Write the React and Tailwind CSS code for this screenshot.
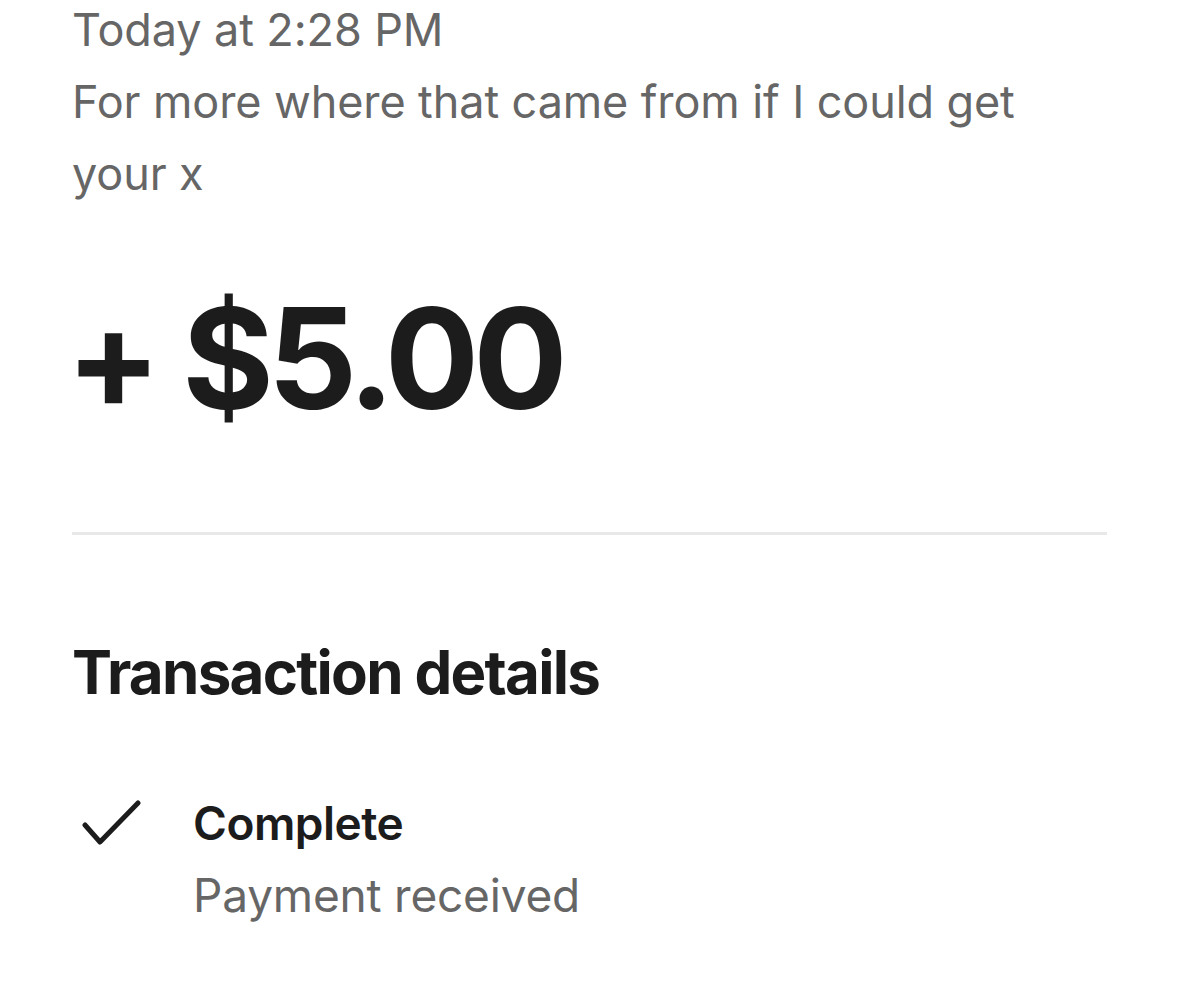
import React from 'react';

const App = () => {
  return (
    <div className="w-[1179px] h-[983px] bg-white overflow-hidden font-['Inter','Liberation_Sans',sans-serif]">
      <div className="pl-[72px] pr-[72px] -mt-[6px]">
        {/* header text */}
        <p className="text-[45px] leading-[72px] text-[#666666] tracking-[-0.1px]">Today at 2:28 PM</p>
        <p className="text-[45px] leading-[72px] text-[#666666] tracking-[-0.1px] w-[980px]">
          For more where that came from if I could get your x
        </p>

        {/* amount */}
        <div className="mt-[68px] -ml-[6px] text-[140px] leading-[160px] font-bold text-[#1c1c1c] tracking-[-6px]">
          + $5.00
        </div>

        <div className="mt-[94px] h-[3px] bg-[#e8e8e8]" />

        {/* details */}
        <h2 className="mt-[102px] text-[60px] leading-[70px] font-bold text-[#1c1c1c] tracking-[-1.7px]">
          Transaction details
        </h2>

        <div className="mt-[80px] flex">
          <div className="w-[121px] pt-[12px] pl-[10px]">
            <svg width="60" height="48" viewBox="0 0 60 48" fill="none">
              <path d="M3 26 L18 43 L56 4" stroke="#1c1c1c" strokeWidth="5" strokeLinecap="round" strokeLinejoin="round" />
            </svg>
          </div>
          <div>
            <p className="text-[46px] leading-[72px] font-semibold text-[#1c1c1c] tracking-[-0.5px]">Complete</p>
            <p className="text-[46px] leading-[72px] text-[#666666] tracking-[-0.2px]">Payment received</p>
          </div>
        </div>
      </div>
    </div>
  );
};

export default App;
